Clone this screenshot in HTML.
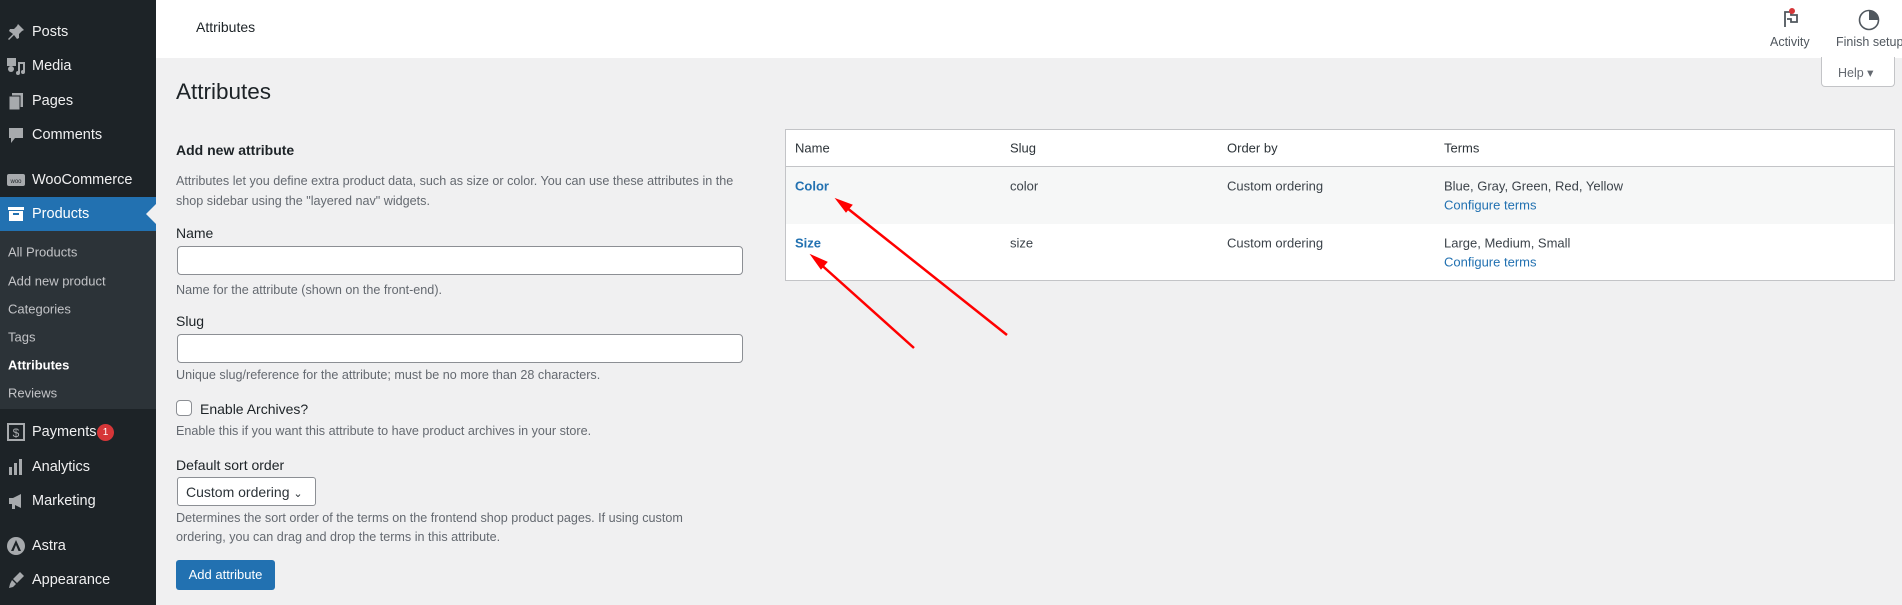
<!DOCTYPE html>
<html><head><meta charset="utf-8"><style>
*{box-sizing:border-box;margin:0;padding:0}
body{width:1902px;height:605px;overflow:hidden;background:#f0f0f1;font-family:"Liberation Sans",sans-serif;color:#3c434a;position:relative}
.abs{position:absolute;white-space:nowrap}
#side{position:absolute;left:0;top:0;width:156px;height:605px;background:#1d2327}
#sub{position:absolute;left:0;top:231px;width:156px;height:178px;background:#2c3338}
#prod{position:absolute;left:0;top:197px;width:156px;height:34px;background:#2271b1}
.mi{position:absolute;left:32px;color:#f0f0f1;font-size:14.5px;transform:translateY(-50%)}
.si{position:absolute;left:8px;color:#c3c4c7;font-size:13px;transform:translateY(-50%)}
.ic{position:absolute;left:6px;width:20px;height:20px;transform:translateY(-50%)}
#head{position:absolute;left:156px;top:0;right:0;height:58px;background:#fff}
.t{transform:translateY(-50%)}
.lbl{font-size:14px;color:#1d2327}
.hint{font-size:12.6px;color:#646970}
.inp{position:absolute;background:#fff;border:1px solid #8c8f94;border-radius:4px}
table{position:absolute;left:785px;top:129px;width:1110px;border:1px solid #c3c4c7;border-collapse:collapse;background:#fff;font-size:13px}
a{color:#2271b1;text-decoration:none}
</style></head><body>
<div id="side"></div><div id="sub"></div><div id="prod"></div>
<div style="position:absolute;left:146px;top:204px;width:0;height:0;border-top:10px solid transparent;border-bottom:10px solid transparent;border-right:10px solid #f0f0f1"></div>
<svg class="ic" style="top:32px" viewBox="0 0 20 20"><path d="M12 2l6 6-2 1-3 3 0 4-2 1-3-4-5 5-1-1 5-5-4-3 1-2 4 0 3-3z" fill="#a7aaad"/></svg>
<svg class="ic" style="top:66px" viewBox="0 0 20 20"><rect x="1" y="2" width="9" height="8" fill="#a7aaad"/><circle cx="5" cy="13" r="3" fill="#a7aaad"/><path d="M12 6h7v10a2 2 0 1 1-2-2V8h-3v9a2 2 0 1 1-2-2z" fill="#a7aaad"/></svg>
<svg class="ic" style="top:101px" viewBox="0 0 20 20"><rect x="6" y="2" width="11" height="14" fill="#a7aaad"/><rect x="3" y="5" width="11" height="14" fill="#a7aaad" stroke="#1d2327"/></svg>
<svg class="ic" style="top:135px" viewBox="0 0 20 20"><path d="M3 3h14v10h-8l-4 5v-5H3z" fill="#a7aaad"/></svg>
<svg class="ic" style="top:180px" viewBox="0 0 20 20"><rect x="1" y="4" width="18" height="12" rx="2" fill="#a7aaad"/><text x="10" y="13" font-size="6" text-anchor="middle" fill="#1d2327" font-family="Liberation Sans">woo</text></svg>
<svg class="ic" style="top:214px" viewBox="0 0 20 20"><rect x="2" y="3" width="16" height="3" fill="#fff"/><rect x="3" y="7" width="14" height="10" fill="#fff"/><rect x="7" y="9" width="6" height="2" fill="#2271b1"/></svg>
<svg class="ic" style="top:432px" viewBox="0 0 20 20"><rect x="2" y="2" width="16" height="16" fill="none" stroke="#a7aaad" stroke-width="2"/><text x="10" y="15" font-size="12" text-anchor="middle" fill="#a7aaad" font-family="Liberation Sans">$</text></svg>
<svg class="ic" style="top:467px" viewBox="0 0 20 20"><rect x="3" y="10" width="3" height="8" fill="#a7aaad"/><rect x="8" y="6" width="3" height="12" fill="#a7aaad"/><rect x="13" y="2" width="3" height="16" fill="#a7aaad"/></svg>
<svg class="ic" style="top:501px" viewBox="0 0 20 20"><path d="M3 7h4l8-4v14l-8-4H3z" fill="#a7aaad"/><rect x="6" y="12" width="3" height="6" fill="#a7aaad"/></svg>
<svg class="ic" style="top:546px" viewBox="0 0 20 20"><circle cx="10" cy="10" r="9" fill="#a7aaad"/><path d="M10 4l5 11h-2.5L10 9l-2.5 6H5z" fill="#1d2327"/></svg>
<svg class="ic" style="top:580px" viewBox="0 0 20 20"><path d="M14 2l4 4-7 7-4-4z M6 10l4 4-3 3-4 1 1-4z" fill="#a7aaad"/></svg>
<div class="mi" style="top:32px">Posts</div>
<div class="mi" style="top:66px">Media</div>
<div class="mi" style="top:101px">Pages</div>
<div class="mi" style="top:135px">Comments</div>
<div class="mi" style="top:180px">WooCommerce</div>
<div class="mi" style="top:214px;color:#fff">Products</div>
<div class="si" style="top:252px">All Products</div>
<div class="si" style="top:281px">Add new product</div>
<div class="si" style="top:309px">Categories</div>
<div class="si" style="top:337px">Tags</div>
<div class="si" style="top:365px;color:#fff;font-weight:bold">Attributes</div>
<div class="si" style="top:393px">Reviews</div>
<div class="mi" style="top:432px">Payments</div>
<div class="abs" style="left:97px;top:424px;width:17px;height:17px;border-radius:50%;background:#d63638;color:#fff;font-size:10px;text-align:center;line-height:17px">1</div>
<div class="mi" style="top:467px">Analytics</div>
<div class="mi" style="top:501px">Marketing</div>
<div class="mi" style="top:546px">Astra</div>
<div class="mi" style="top:580px">Appearance</div>

<div id="head"></div>
<div class="abs t" style="left:196px;top:27px;font-size:14px;color:#1d2327">Attributes</div>
<svg class="abs" style="left:1781px;top:7px" width="20" height="22" viewBox="0 0 20 22"><path d="M4 20V5h6v3h6v7h-6v-3H6" fill="none" stroke="#50575e" stroke-width="1.8"/><circle cx="11" cy="4" r="3" fill="#d63638"/></svg>
<div class="abs t" style="left:1770px;top:42px;font-size:12.5px;color:#50575e">Activity</div>
<svg class="abs" style="left:1858px;top:9px" width="22" height="22" viewBox="0 0 22 22"><circle cx="11" cy="11" r="9.5" fill="none" stroke="#50575e" stroke-width="1.6"/><path d="M11 11V1.5A9.5 9.5 0 0 1 20.5 11z" fill="#50575e"/></svg>
<div class="abs t" style="left:1836px;top:42px;font-size:12.5px;color:#50575e">Finish setup</div>
<div class="abs" style="left:1821px;top:57px;width:74px;height:30px;background:#fff;border:1px solid #c3c4c7;border-top:none;border-radius:0 0 4px 4px;font-size:12.5px;color:#646970;padding:8px 0 0 16px">Help ▾</div>

<div class="abs t" style="left:176px;top:92px;font-size:22.5px;color:#1d2327">Attributes</div>
<div class="abs t" style="left:176px;top:150px;font-size:14px;font-weight:bold;color:#1d2327">Add new attribute</div>
<div class="abs t hint" style="left:176px;top:181px">Attributes let you define extra product data, such as size or color. You can use these attributes in the</div>
<div class="abs t hint" style="left:176px;top:201px">shop sidebar using the "layered nav" widgets.</div>
<div class="abs t lbl" style="left:176px;top:233px">Name</div>
<div class="inp" style="left:177px;top:246px;width:566px;height:29px"></div>
<div class="abs t hint" style="left:176px;top:290px">Name for the attribute (shown on the front-end).</div>
<div class="abs t lbl" style="left:176px;top:321px">Slug</div>
<div class="inp" style="left:177px;top:334px;width:566px;height:29px"></div>
<div class="abs t hint" style="left:176px;top:375px">Unique slug/reference for the attribute; must be no more than 28 characters.</div>
<div class="inp" style="left:176px;top:400px;width:16px;height:16px"></div>
<div class="abs t lbl" style="left:200px;top:409px">Enable Archives?</div>
<div class="abs t hint" style="left:176px;top:431px">Enable this if you want this attribute to have product archives in your store.</div>
<div class="abs t lbl" style="left:176px;top:465px">Default sort order</div>
<div class="inp" style="left:177px;top:477px;width:139px;height:29px;border-radius:3px;font-size:14px;color:#2c3338;padding:6px 0 0 8px">Custom ordering <span style="font-size:11px">⌄</span></div>
<div class="abs t hint" style="left:176px;top:518px">Determines the sort order of the terms on the frontend shop product pages. If using custom</div>
<div class="abs t hint" style="left:176px;top:537px">ordering, you can drag and drop the terms in this attribute.</div>
<div class="abs" style="left:176px;top:560px;width:99px;height:30px;background:#2271b1;border-radius:3px;color:#fff;font-size:13px;text-align:center;line-height:30px">Add attribute</div>

<div class="abs" style="left:785px;top:129px;width:1110px;height:152px;background:#fff;border:1px solid #c3c4c7"></div>
<div class="abs" style="left:786px;top:166px;width:1108px;height:1px;background:#c3c4c7"></div>
<div class="abs" style="left:786px;top:167px;width:1108px;height:57px;background:#f6f7f7"></div>
<div class="abs t" style="left:795px;top:148px;font-size:13px;color:#2c3338">Name</div>
<div class="abs t" style="left:1010px;top:148px;font-size:13px;color:#2c3338">Slug</div>
<div class="abs t" style="left:1227px;top:148px;font-size:13px;color:#2c3338">Order by</div>
<div class="abs t" style="left:1444px;top:148px;font-size:13px;color:#2c3338">Terms</div>
<div class="abs t" style="left:795px;top:186px;font-size:13px;font-weight:bold;color:#2271b1">Color</div>
<div class="abs t" style="left:1010px;top:186px;font-size:13px">color</div>
<div class="abs t" style="left:1227px;top:186px;font-size:13px">Custom ordering</div>
<div class="abs t" style="left:1444px;top:186px;font-size:13px">Blue, Gray, Green, Red, Yellow</div>
<div class="abs t" style="left:1444px;top:205px;font-size:13px;color:#2271b1">Configure terms</div>
<div class="abs t" style="left:795px;top:243px;font-size:13px;font-weight:bold;color:#2271b1">Size</div>
<div class="abs t" style="left:1010px;top:243px;font-size:13px">size</div>
<div class="abs t" style="left:1227px;top:243px;font-size:13px">Custom ordering</div>
<div class="abs t" style="left:1444px;top:243px;font-size:13px">Large, Medium, Small</div>
<div class="abs t" style="left:1444px;top:262px;font-size:13px;color:#2271b1">Configure terms</div>

<svg class="abs" style="left:0;top:0" width="1902" height="605">
<g stroke="#f00" stroke-width="2.5" fill="#f00">
<line x1="1007" y1="335" x2="842" y2="204"/><polygon points="836,199 852,205 846,212" stroke-width="1"/>
<line x1="914" y1="348" x2="817" y2="261"/><polygon points="811,255 827,262 821,269" stroke-width="1"/>
</g></svg>
</body></html>
